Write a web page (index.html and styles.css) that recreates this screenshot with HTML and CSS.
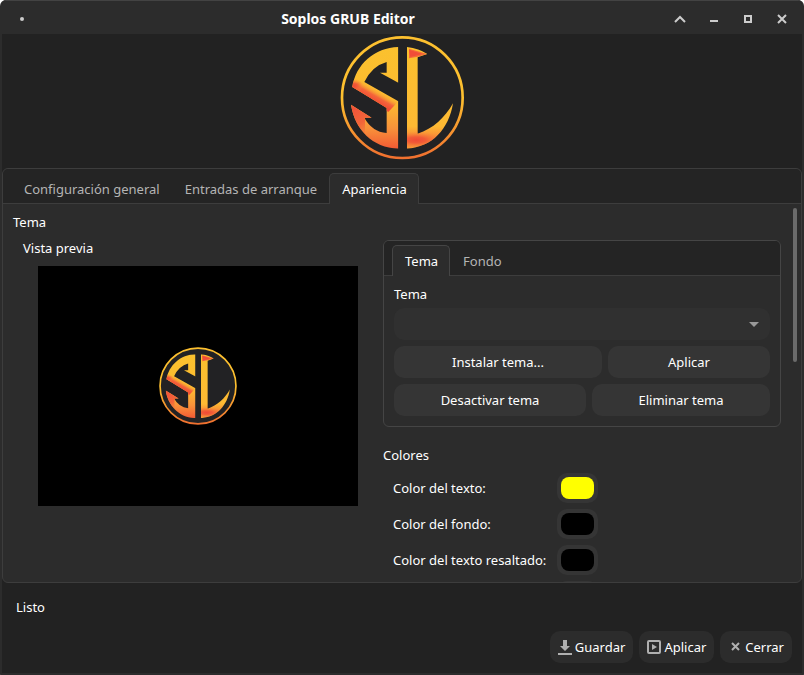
FILE: index.html
```html
<!DOCTYPE html>
<html lang="es">
<head>
<meta charset="utf-8">
<meta name="viewport" content="width=device-width, initial-scale=1">
<title>Soplos GRUB Editor</title>
<link rel="stylesheet" href="styles.css">
</head>
<body>
<div class="window">
  <header class="titlebar">
    <span class="titlebar-dot"></span>
    <h1 class="title">Soplos GRUB Editor</h1>
    <div class="window-controls">
      <button type="button" aria-label="Enrollar"><svg viewBox="0 0 16 16"><path d="M3 11l5-5 5 5" fill="none" stroke="currentColor" stroke-width="2"/></svg></button>
      <button type="button" aria-label="Minimizar"><svg viewBox="0 0 16 16"><path d="M4 9h8v2H4z" fill="currentColor"/></svg></button>
      <button type="button" aria-label="Maximizar"><svg viewBox="0 0 16 16"><path d="M5 5h6v6H5z" fill="none" stroke="currentColor" stroke-width="2"/></svg></button>
      <button type="button" aria-label="Cerrar ventana"><svg viewBox="0 0 16 16"><path d="M4 4l8 8M12 4l-8 8" fill="none" stroke="currentColor" stroke-width="2"/></svg></button>
    </div>
  </header>

  <div class="banner">
    <svg class="banner-logo" viewBox="0 6 402 402" role="img" aria-label="Logotipo SL">
      <defs>
        <linearGradient id="ring" x1="0" y1="0" x2="0" y2="1">
          <stop offset="0.5" stop-color="#fdc02f"/><stop offset="1" stop-color="#f1702f"/>
        </linearGradient>
        <linearGradient id="gold" gradientUnits="userSpaceOnUse" x1="0" y1="45" x2="0" y2="350">
          <stop offset="0" stop-color="#fbc12e"/><stop offset="0.55" stop-color="#fdbb30"/><stop offset="0.8" stop-color="#f8923a"/><stop offset="1" stop-color="#f25a34"/>
        </linearGradient>
        <linearGradient id="gold-l" gradientUnits="userSpaceOnUse" x1="0" y1="45" x2="0" y2="350">
          <stop offset="0" stop-color="#fbc12e"/><stop offset="0.78" stop-color="#fdb933"/><stop offset="0.9" stop-color="#f88438"/><stop offset="1" stop-color="#f99a35"/>
        </linearGradient>
        <linearGradient id="fold" gradientUnits="userSpaceOnUse" x1="107" y1="200" x2="124" y2="170">
          <stop offset="0" stop-color="#f24e36"/><stop offset="0.4" stop-color="#f4663a"/><stop offset="1" stop-color="#fbb033" stop-opacity="0"/>
        </linearGradient>
        <linearGradient id="tail" gradientUnits="userSpaceOnUse" x1="55" y1="230" x2="112" y2="310">
          <stop offset="0" stop-color="#f1543a"/><stop offset="0.5" stop-color="#f36539"/><stop offset="1" stop-color="#f67b38" stop-opacity="0"/>
        </linearGradient>
        <radialGradient id="glow">
          <stop offset="0" stop-color="#f14a36"/><stop offset="0.35" stop-color="#f25c37"/><stop offset="1" stop-color="#f98d36" stop-opacity="0"/>
        </radialGradient>
        <clipPath id="clip-s"><path d="M190 45V152L135 122H155V90Q111 102 88 150L190 208V350C112 347 60 292 48 218L110 257H88Q111 299 155 303V228L52 165C62 98 119 46 190 45Z"/></clipPath>
        <clipPath id="clip-l"><path d="M216 45Q252 49 277 66L248 76V305C294 291 330 256 354 214C342 291 291 346 216 350Z"/></clipPath>
        <g id="emblem">
          <circle cx="202" cy="197" r="181" fill="#222224"/>
          <circle cx="202" cy="197" r="181" fill="none" stroke="url(#ring)" stroke-width="8"/>
          <g clip-path="url(#clip-s)">
            <path fill="url(#gold)" d="M40 40h155v315H40z"/>
            <path fill="url(#fold)" d="M45 165L80 145L190 208L160 240Z"/>
            <ellipse fill="url(#glow)" cx="58" cy="162" rx="26" ry="22"/>
            <path fill="url(#tail)" d="M40 212L112 257L90 262V335H40Z"/>
          </g>
          <g clip-path="url(#clip-l)">
            <path fill="url(#gold-l)" d="M210 40h150v315H210z"/>
            <path fill="#f46b38" d="M222 50L277 66L248 74L222 79Z"/>
            <path fill="#f14e38" d="M222 53L262 66L226 75Z"/>
            <ellipse fill="url(#glow)" cx="244" cy="324" rx="80" ry="26"/>
          </g>
        </g>
      </defs>
      <use href="#emblem"/>
    </svg>
  </div>

  <main class="notebook main-notebook">
    <div class="tabs" role="tablist">
      <button type="button" class="tab" role="tab" aria-selected="false">Configuración general</button>
      <button type="button" class="tab" role="tab" aria-selected="false">Entradas de arranque</button>
      <button type="button" class="tab" role="tab" aria-selected="true">Apariencia</button>
    </div>
    <div class="page" role="tabpanel">
      <h2 class="heading">Tema</h2>
      <div class="columns">
        <section class="preview">
          <h3 class="heading preview-title">Vista previa</h3>
          <div class="preview-screen">
            <svg class="preview-logo" viewBox="16 11 372 372" role="img" aria-label="Vista previa del fondo"><use href="#emblem"/></svg>
          </div>
        </section>
        <div class="settings">
          <div class="notebook theme-notebook">
            <div class="tabs" role="tablist">
              <button type="button" class="tab" role="tab" aria-selected="true">Tema</button>
              <button type="button" class="tab" role="tab" aria-selected="false">Fondo</button>
            </div>
            <div class="theme-page" role="tabpanel">
              <label class="heading" for="theme">Tema</label>
              <div class="select-wrap"><select id="theme" class="select"></select></div>
              <div class="button-row install-row">
                <button type="button" class="button">Instalar tema...</button>
                <button type="button" class="button">Aplicar</button>
              </div>
              <div class="button-row remove-row">
                <button type="button" class="button">Desactivar tema</button>
                <button type="button" class="button">Eliminar tema</button>
              </div>
            </div>
          </div>
          <h2 class="heading colors-title">Colores</h2>
          <div class="colors">
            <label for="c-text">Color del texto:</label><input type="color" id="c-text" value="#ffff00">
            <label for="c-back">Color del fondo:</label><input type="color" id="c-back" value="#000000">
            <label for="c-htext">Color del texto resaltado:</label><input type="color" id="c-htext" value="#000000">
            <input type="color" id="c-hback" value="#000000" aria-label="Color del fondo resaltado">
          </div>
        </div>
      </div>
      <span class="scroll-thumb"></span>
    </div>
  </main>

  <footer class="footer">
    <p class="status">Listo</p>
    <div class="actions">
      <button type="button" class="button action"><svg viewBox="0 0 16 16"><path d="M6 1h4v6h3l-5 5-5-5h3zM1 14h14v2H1z" fill="currentColor"/></svg>Guardar</button>
      <button type="button" class="button action"><svg viewBox="0 0 16 16"><rect x="2" y="2" width="12" height="12" rx="1" fill="none" stroke="currentColor" stroke-width="2"/><path d="M6 5l5 3-5 3z" fill="currentColor"/></svg>Aplicar</button>
      <button type="button" class="button action"><svg viewBox="0 0 16 16"><path d="M5 4l7 7M12 4l-7 7" fill="none" stroke="currentColor" stroke-width="2"/></svg>Cerrar</button>
    </div>
  </footer>
</div>
</body>
</html>
```
FILE: styles.css
```css
* {
  box-sizing: border-box;
}

body {
  margin: 0;
  background: #fff;
  color: #fff;
  font: 13px/20px "Noto Sans", "Open Sans", sans-serif;
}

button,
input,
select {
  margin: 0;
  padding: 0;
  border: 0;
  background: none;
  color: inherit;
  font: inherit;
}

.window {
  display: flex;
  flex-direction: column;
  height: 100vh;
  overflow: hidden;
  border: solid #2c2c2c;
  border-width: 0 2px 2px;
  border-radius: 6px 6px 1px 1px;
  background: #222;
}

.titlebar {
  display: flex;
  align-items: center;
  height: 34px;
  flex: none;
  margin: 0 -2px;
  padding: 2px 14px 0 20px;
  border-top: 1px solid #434343;
  background: #2c2c2c;
}

.titlebar-dot {
  width: 4px;
  height: 4px;
  border-radius: 2px;
  background: #ccc;
}

.title {
  flex: 1;
  margin: 0;
  font-size: 14px;
  line-height: 20px;
  font-weight: 700;
  text-align: center;
}

.window-controls {
  display: flex;
  justify-content: flex-end;
  gap: 18px;
  color: #ccc;
}

.window-controls button {
  width: 16px;
  height: 16px;
}

.window-controls svg,
.action svg {
  display: block;
  width: 16px;
  height: 16px;
}

.banner {
  display: flex;
  flex: none;
  justify-content: center;
}

.banner-logo {
  display: block;
  width: 134px;
  height: 134px;
}

.notebook {
  display: flex;
  flex-direction: column;
  border: 1px solid #3d3d3d;
  border-radius: 6px;
  background: #2c2c2c;
}

.main-notebook {
  flex: 1;
  min-height: 0;
  overflow: hidden;
}

.tabs {
  display: flex;
  flex: none;
  align-items: flex-end;
  height: 35px;
  padding: 0 8px;
  border-radius: 5px 5px 0 0;
  background: #242424;
  box-shadow: inset 0 -1px #3d3d3d;
}

.tab {
  height: 31px;
  padding: 0 11px 0 12px;
  border: 1px solid transparent;
  border-bottom: 0;
  border-radius: 5px 5px 0 0;
  color: #b4b4b4;
}

.tab[aria-selected="true"] {
  border-color: #3d3d3d;
  background: #2c2c2c;
  color: #fff;
}

.theme-notebook,
.theme-notebook .tab[aria-selected="true"] {
  border-color: #454545;
}

.page {
  position: relative;
  flex: 1;
  min-height: 0;
  overflow: hidden;
  padding: 8px 20px 0 10px;
}

.heading {
  display: block;
  margin: 0;
  font-size: 13px;
  line-height: 20px;
  font-weight: 400;
}

.columns {
  display: flex;
  align-items: flex-start;
  gap: 25px;
  padding-top: 6px;
}

.preview {
  padding-left: 25px;
}

.preview-title {
  margin-left: -15px;
}

.preview-screen {
  display: flex;
  align-items: center;
  justify-content: center;
  width: 320px;
  height: 240px;
  margin-top: 8px;
  background: #000;
}

.preview-logo {
  width: 78px;
  height: 78px;
}

.settings {
  flex: 1;
  padding-top: 2px;
}

.theme-page {
  display: flex;
  flex-direction: column;
  gap: 6px;
  padding: 8px 10px 10px;
}

.theme-page .heading {
  margin-bottom: -2px;
}

.select-wrap {
  position: relative;
}

.select-wrap::after {
  content: "";
  position: absolute;
  top: 14px;
  right: 11px;
  border: solid transparent;
  border-width: 5px 5px 0;
  border-top-color: #999;
  pointer-events: none;
}

.select {
  display: block;
  width: 100%;
  height: 32px;
  border-radius: 10px;
  background: #303030;
  appearance: none;
}

.button-row {
  display: grid;
  gap: 6px;
}

.install-row {
  grid-template-columns: 208fr 162fr;
}

.remove-row {
  grid-template-columns: 192fr 178fr;
}

.button {
  height: 32px;
  border-radius: 10px;
  background: #353535;
}

.colors-title {
  margin: 18px 0 8px;
}

.colors {
  display: grid;
  grid-template-columns: 154px 41px;
  gap: 6px 10px;
  align-items: center;
  padding-left: 10px;
  white-space: nowrap;
}

input[type="color"] {
  grid-column: 2;
  width: 41px;
  height: 30px;
  padding: 4px;
  border-radius: 10px;
  background: #353535;
  appearance: none;
}

input[type="color"]::-webkit-color-swatch-wrapper {
  padding: 0;
}

input[type="color"]::-webkit-color-swatch {
  border: 0;
  border-radius: 8px;
}

.scroll-thumb {
  position: absolute;
  top: 4px;
  right: 4px;
  width: 4px;
  height: 154px;
  border-radius: 2px;
  background: #6b6b6b;
}

.footer {
  flex: none;
  padding: 14px 8px 10px 14px;
}

.status {
  margin: 0;
}

.actions {
  display: flex;
  justify-content: flex-end;
  gap: 6px;
  padding: 14px 2px 0 0;
}

.action {
  display: flex;
  align-items: center;
  gap: 2px;
  padding: 0 8px 0 7px;
  background: #2c2c2c;
}

.action svg {
  color: #b0b0b0;
}
```
